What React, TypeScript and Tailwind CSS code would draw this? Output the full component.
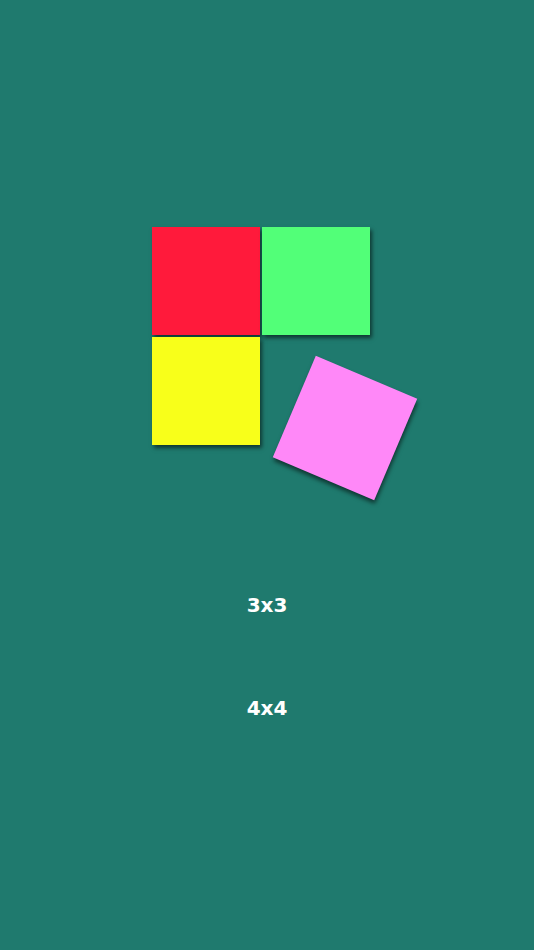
export default function App() {
  return (
    <div className="w-[534px] h-[950px] bg-[#1f7a6e] flex flex-col overflow-hidden" style={{ fontFamily: '"DejaVu Sans", "Liberation Sans", sans-serif' }}>
      <div className="pt-[227px] pl-[152px]">
        <div className="grid grid-cols-[108px_108px] grid-rows-[108px_108px] gap-[2px]">
          <div className="bg-[#ff1a3b] shadow-[2px_3px_4px_rgba(0,0,0,0.55)]" />
          <div className="bg-[#52ff78] shadow-[2px_3px_4px_rgba(0,0,0,0.55)]" />
          <div className="bg-[#f8ff1a] shadow-[2px_3px_4px_rgba(0,0,0,0.55)]" />
          <div className="bg-[#ff88f8] shadow-[2px_3px_4px_rgba(0,0,0,0.55)] translate-x-[29px] translate-y-[37px] rotate-[23deg] scale-[1.02]" />
        </div>
      </div>
      <div className="mt-[148px] flex flex-col items-center gap-[79px] text-white font-bold text-[20px] leading-[24px]">
        <div>3x3</div>
        <div>4x4</div>
      </div>
    </div>
  );
}
